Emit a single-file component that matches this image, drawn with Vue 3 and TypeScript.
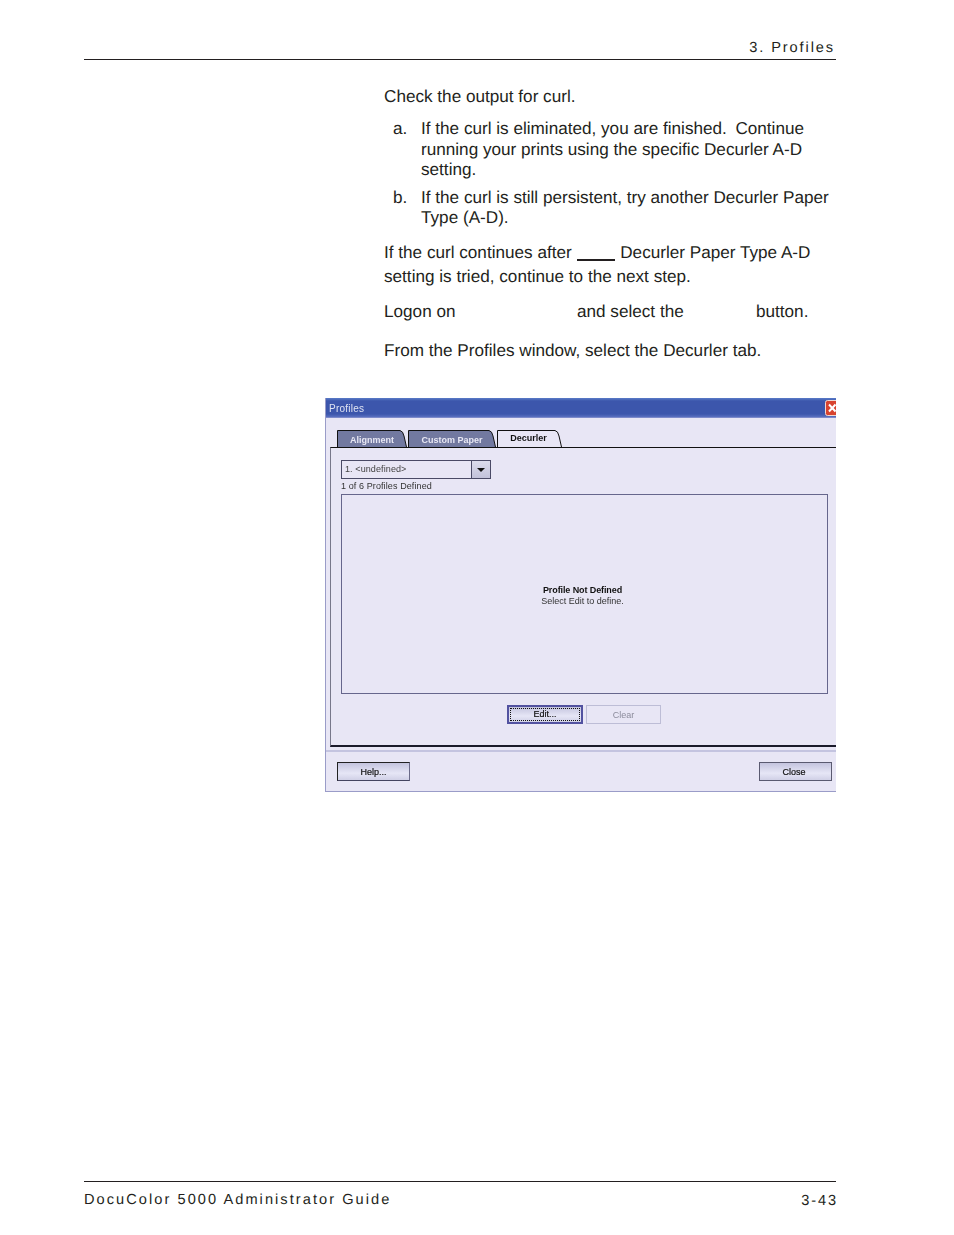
<script setup lang="ts">
const tabs = [
  { label: 'Alignment', width: 70, active: false },
  { label: 'Custom Paper', width: 88, active: false },
  { label: 'Decurler', width: 65, active: true },
]
const tabPath = (w: number) => `M0.5 17V0.5H${w - 7}Q${w - 4} 1 ${w - 3} 6L${w - 0.5} 17`
</script>

<template>
  <div class="page">
    <header class="head">
      <span>3. Profiles</span>
    </header>

    <main class="body">
      <p class="intro">Check the output for curl.</p>
      <ol class="steps">
        <li><span class="mark">a.</span><span>If the curl is eliminated, you are finished.&ensp;Continue running your prints using the specific Decurler A-D setting.</span></li>
        <li><span class="mark">b.</span><span>If the curl is still persistent, try another Decurler Paper Type (A-D).</span></li>
      </ol>
      <p class="note">If the curl continues after <span class="blank"></span> Decurler Paper Type A-D<br />setting is tried, continue to the next step.</p>
      <p class="logon"><span class="l1">Logon on</span><span class="l2">and select the</span><span>button.</span></p>
      <p class="from">From the Profiles window, select the Decurler tab.</p>
    </main>

    <section class="dialog">
      <div class="title">
        <span>Profiles</span>
        <svg class="x" width="11" height="16" viewBox="0 0 11 16">
          <rect x="0.5" y="0.5" width="14" height="15" rx="2" fill="#d8432f" stroke="#f0d8d0" />
          <path d="M4 4.500L10.500 11.500M10.500 4.500L4 11.500" stroke="#fff" stroke-width="2" />
        </svg>
      </div>

      <div class="tabs">
        <div v-for="t in tabs" :key="t.label" class="tab" :class="{ on: t.active }" :style="{ width: t.width + 'px' }">
          <svg :width="t.width" height="18" :viewBox="`0 0 ${t.width} 18`">
            <path :d="tabPath(t.width)" :fill="t.active ? '#e8e6f5' : '#7279a0'" stroke="#111" stroke-width="1" />
          </svg>
          <span>{{ t.label }}</span>
        </div>
      </div>

      <div class="panel">
        <div class="combo">
          <span class="combo-text">1. &lt;undefined&gt;</span>
          <span class="arrow"><i></i></span>
        </div>
        <div class="count">1 of 6 Profiles Defined</div>
        <div class="box">
          <strong>Profile Not Defined</strong>
          <span>Select Edit to define.</span>
        </div>
        <div class="actions">
          <button class="btn edit"><span class="dots"><span class="lbl">Edit...</span></span></button>
          <button class="btn clear"><span class="lbl">Clear</span></button>
        </div>
      </div>

      <div class="foot">
        <button class="btn help"><span class="lbl">Help...</span></button>
        <button class="btn close"><span class="lbl">Close</span></button>
      </div>
    </section>

    <footer class="bottom">
      <span>DocuColor 5000 Administrator Guide</span>
      <span class="num">3-43</span>
    </footer>
  </div>
</template>

<style>
html, body { margin: 0; background: #fff; }
</style>

<style scoped>
.page {
  width: 954px;
  height: 1235px;
  box-sizing: border-box;
  padding: 39px 118px 0 84px;
  display: flex;
  flex-direction: column;
  font-family: "Liberation Sans", Arial, sans-serif;
  color: #231f20;
  overflow: hidden;
  text-rendering: geometricPrecision;
}
.head {
  height: 21px;
  box-sizing: border-box;
  border-bottom: 1px solid #231f20;
  text-align: right;
  font-size: 14.6px;
  line-height: 16px;
  letter-spacing: 1.9px;
  padding: 1px 1px 0 0;
}
.body {
  font-size: 17.15px;
  line-height: 20.4px;
  padding-left: 300px;
}
.body p, .steps { margin: 0; }
.intro { margin-top: 26px !important; }
.steps {
  list-style: none;
  padding: 0;
  margin-top: 12px !important;
  display: flex;
  flex-direction: column;
  gap: 7px;
}
.steps li { display: flex; }
.mark { width: 37px; padding-left: 9px; box-sizing: border-box; flex: none; }
.note { margin-top: 13px !important; line-height: 24px; }
.blank {
  display: inline-block;
  width: 38px;
  height: 1px;
  border-bottom: 2px solid #231f20;
  margin: 0 0 0 1px;
  vertical-align: -3px;
}
.logon { margin-top: 13px !important; display: flex; }
.l1 { width: 193px; }
.l2 { width: 179px; }
.from { margin-top: 18px !important; }

.dialog {
  margin: 38px 0 0 241px;
  width: 511px;
  height: 394px;
  box-sizing: border-box;
  background: #e8e6f5;
  border-left: 1px solid #9a9cc8;
  border-bottom: 1px solid #9a9cc8;
  font-family: "Liberation Sans", Arial, sans-serif;
  font-size: 9px;
  color: #222;
  overflow: hidden;
  text-rendering: auto;
}
.title {
  height: 20px;
  box-sizing: border-box;
  background: linear-gradient(#5a7cc8 0, #3c56ac 3px, #3c56ac 16px, #5a70c0 19px, #a0a4d4 20px);
  color: #dfe3f2;
  font-size: 10px;
  letter-spacing: 0.25px;
  display: flex;
  align-items: center;
  justify-content: space-between;
  padding-left: 3px;
}
.title span, .tab span, .combo-text, .count, .box strong, .box span, .lbl { filter: blur(0.3px); }
.x { flex: none; }
.tabs {
  display: flex;
  gap: 1px;
  margin: 12px 0 0 11px;
  height: 17px;
  position: relative;
  z-index: 1;
}
.tab {
  position: relative;
  height: 18px;
  display: flex;
  justify-content: center;
  align-items: center;
  color: #e8e8f4;
  font-weight: bold;
  box-sizing: border-box;
}
.tab svg { position: absolute; left: 0; top: 0; }
.tab span { position: relative; padding-top: 2px; }
.tab.on { color: #111; }
.tab.on span { padding-top: 0; margin-top: -3px; margin-left: -2px; }
.panel {
  margin-left: 4px;
  height: 300px;
  box-sizing: border-box;
  border-top: 1px solid #111;
  border-left: 1px solid #77778a;
  border-bottom: 2px solid #1a1a2a;
  padding: 12px 8px 0 10px;
}
.combo {
  width: 150px;
  height: 19px;
  box-sizing: border-box;
  border: 1px solid #4a4a66;
  display: flex;
}
.combo-text {
  flex: 1;
  line-height: 17px;
  padding-left: 3px;
  letter-spacing: 0.1px;
  color: #444;
}
.arrow {
  width: 18px;
  border-left: 1px solid #4a4a66;
  background: linear-gradient(#dcdcec, #c2c2da);
  display: flex;
  align-items: center;
  justify-content: center;
}
.arrow i {
  width: 0;
  height: 0;
  border-left: 4px solid transparent;
  border-right: 4px solid transparent;
  border-top: 4px solid #111;
}
.count {
  height: 15px;
  line-height: 15px;
  letter-spacing: 0.1px;
  color: #333;
}
.box {
  width: 487px;
  height: 200px;
  box-sizing: border-box;
  border: 1px solid #66668c;
  display: flex;
  flex-direction: column;
  align-items: center;
  justify-content: center;
  line-height: 11px;
  padding: 4px 4px 0 0;
}
.box strong { color: #111; letter-spacing: -0.1px; }
.box span { color: #333; }
.actions {
  display: flex;
  justify-content: center;
  gap: 3px;
  margin-top: 11px;
  padding-right: 1px;
}
.btn {
  font: inherit;
  height: 19px;
  padding: 0;
  box-sizing: border-box;
  color: #111;
  border: 1px solid #222;
  border-right-color: #6a6a88;
  border-bottom-color: #444460;
  background: linear-gradient(#c4c4de, #e6e6f6 60%, #d0d0e6);
}
.help .lbl, .close .lbl, .edit .lbl { -webkit-text-stroke: 0.2px #111; }
.edit {
  width: 76px;
  border: 2px solid #5252a0;
  padding: 1px;
  display: flex;
}
.dots {
  flex: 1;
  border: 1px dotted #111;
  line-height: 11px;
}
.clear {
  width: 75px;
  border: 1px solid #bdbdd6;
  background: #e8e6f5;
  color: #8c8c9c;
}
.foot {
  margin-top: 3px;
  border-top: 2px solid #c4c4e0;
  padding: 10px 4px 0 11px;
  display: flex;
  justify-content: space-between;
}
.help, .close { width: 73px; }
.close { padding-right: 3px; border-color: #5a5a70; }
.bottom {
  margin-top: auto;
  margin-bottom: 27px;
  height: 27px;
  width: 752px;
  box-sizing: border-box;
  border-top: 1px solid #231f20;
  padding-top: 10px;
  display: flex;
  justify-content: space-between;
  font-size: 14.6px;
  line-height: 17px;
  letter-spacing: 2.05px;
}
.num { letter-spacing: 1.9px; padding-top: 1px; margin-right: -2px; }
</style>
